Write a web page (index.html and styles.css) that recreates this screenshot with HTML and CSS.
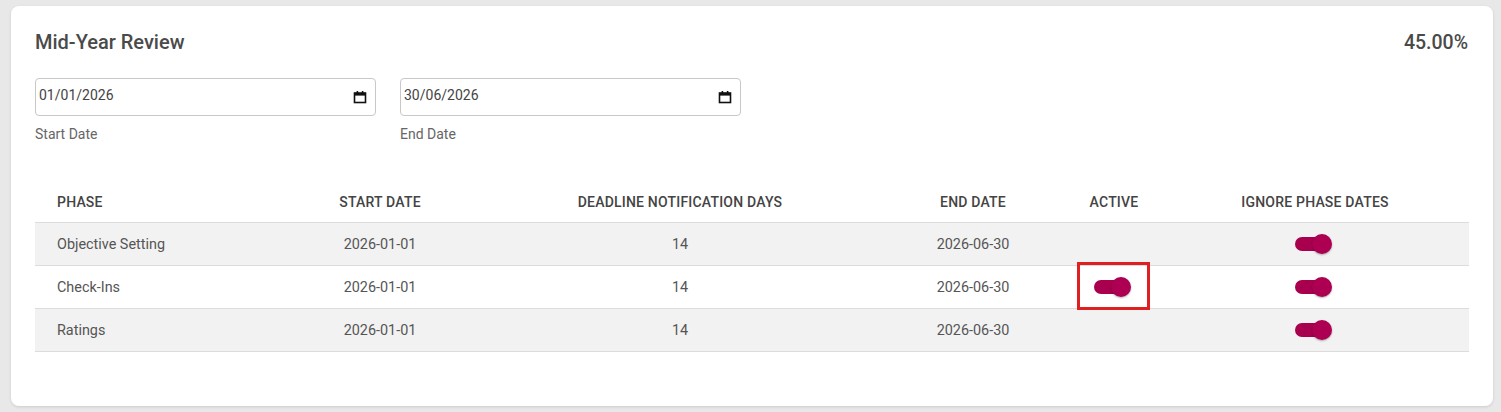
FILE: index.html
```html
<!DOCTYPE html>
<html lang="en">
<head>
  <meta charset="UTF-8">
  <meta name="viewport" content="width=device-width, initial-scale=1.0">
  <title>Mid-Year Review</title>
  <link rel="stylesheet" href="styles.css">
</head>
<body>
  <div class="card">
    <div class="card-head">
      <h2 class="title">Mid-Year Review</h2>
      <span class="score">45.00%</span>
    </div>

    <div class="dates">
      <div class="field">
        <div class="date-input">
          <span>01/01/2026</span>
          <svg class="cal" width="14" height="14" viewBox="0 0 14 14">
            <rect x="1.5" y="3" width="11" height="9.5" fill="none" stroke="#111" stroke-width="1.6"/>
            <rect x="1.5" y="3" width="11" height="2.6" fill="#111"/>
            <rect x="3.6" y="1" width="1.6" height="2.5" fill="#111"/>
            <rect x="8.8" y="1" width="1.6" height="2.5" fill="#111"/>
          </svg>
        </div>
        <label class="field-label">Start Date</label>
      </div>
      <div class="field">
        <div class="date-input">
          <span>30/06/2026</span>
          <svg class="cal" width="14" height="14" viewBox="0 0 14 14">
            <rect x="1.5" y="3" width="11" height="9.5" fill="none" stroke="#111" stroke-width="1.6"/>
            <rect x="1.5" y="3" width="11" height="2.6" fill="#111"/>
            <rect x="3.6" y="1" width="1.6" height="2.5" fill="#111"/>
            <rect x="8.8" y="1" width="1.6" height="2.5" fill="#111"/>
          </svg>
        </div>
        <label class="field-label">End Date</label>
      </div>
    </div>

    <table class="phases">
      <thead>
        <tr>
          <th class="c-phase">Phase</th>
          <th class="c-start">Start Date</th>
          <th class="c-days">Deadline Notification Days</th>
          <th class="c-end">End Date</th>
          <th class="c-active">Active</th>
          <th class="c-ignore">Ignore Phase Dates</th>
        </tr>
      </thead>
      <tbody>
        <tr>
          <td class="c-phase">Objective Setting</td>
          <td>2026-01-01</td>
          <td>14</td>
          <td>2026-06-30</td>
          <td></td>
          <td><span class="switch"><span class="knob"></span></span></td>
        </tr>
        <tr>
          <td class="c-phase">Check-Ins</td>
          <td>2026-01-01</td>
          <td>14</td>
          <td>2026-06-30</td>
          <td class="marked"><span class="switch"><span class="knob"></span></span><span class="mark"></span></td>
          <td><span class="switch"><span class="knob"></span></span></td>
        </tr>
        <tr>
          <td class="c-phase">Ratings</td>
          <td>2026-01-01</td>
          <td>14</td>
          <td>2026-06-30</td>
          <td></td>
          <td><span class="switch"><span class="knob"></span></span></td>
        </tr>
      </tbody>
    </table>
  </div>
</body>
</html>
```

FILE: styles.css
```css
body {
  margin: 0;
  padding: 6px 8px 6px 11px;
  background-color: #e8e8e8;
  font-family: 'Roboto', 'Liberation Sans', sans-serif;
  color: #555;
}

.card {
  height: 400px;
  box-sizing: border-box;
  background-color: #fff;
  border-radius: 8px;
  box-shadow: 0 1px 3px rgba(0, 0, 0, 0.12);
  padding: 24px 24px 0 24px;
}

.card-head {
  display: flex;
  justify-content: space-between;
  align-items: center;
  height: 24px;
}

.title {
  margin: 0;
  font-size: 20px;
  font-weight: 500;
  color: #4a4a4a;
}

.score {
  font-size: 19.5px;
  font-weight: 500;
  color: #4a4a4a;
  margin-right: 1px;
}

.dates {
  display: flex;
  gap: 24px;
  margin-top: 24px;
}

.field {
  display: flex;
  flex-direction: column;
  width: 341px;
}

.date-input {
  height: 38px;
  box-sizing: border-box;
  border: 1px solid #c8c8c8;
  border-radius: 4px;
  display: flex;
  align-items: center;
  justify-content: space-between;
  padding: 0 8px 0 3px;
  font-size: 14px;
  color: #444;
}

.date-input span {
  margin-top: -5px;
}

.cal {
  margin-top: -1px;
}

.field-label {
  margin-top: 10px;
  font-size: 14px;
  line-height: 16px;
  color: #666;
}

.phases {
  width: 100%;
  margin-top: 39px;
  border-collapse: collapse;
  table-layout: fixed;
}

.phases th {
  height: 41px;
  font-size: 14px;
  font-weight: 500;
  letter-spacing: 0.2px;
  color: #444;
  text-transform: uppercase;
  text-align: center;
  border-bottom: 1px solid #dcdcdc;
  padding: 0;
}

.phases td {
  height: 42px;
  font-size: 14.4px;
  color: #555;
  text-align: center;
  border-bottom: 1px solid #dcdcdc;
  padding: 0;
}

.phases tbody tr:nth-child(odd) {
  background-color: #f2f2f2;
}

.phases .c-phase {
  text-align: left;
  padding-left: 22px;
  width: 222px;
}

.c-start { width: 202px; }
.c-days { width: 398px; }
.c-end { width: 188px; }
.c-active { width: 94px; }
.c-ignore { width: 308px; }

.switch {
  display: inline-block;
  position: relative;
  width: 34px;
  height: 14px;
  border-radius: 7px;
  background-color: #a8004f;
  vertical-align: middle;
  margin-right: 6px;
  margin-top: -2px;
}

.knob {
  position: absolute;
  right: -3px;
  top: -3px;
  width: 20px;
  height: 20px;
  border-radius: 50%;
  background-color: #ad0052;
  box-shadow: 0 1px 2px rgba(0, 0, 0, 0.3);
}

.marked {
  position: relative;
}

.mark {
  position: absolute;
  left: 10px;
  top: -4px;
  width: 73px;
  height: 48px;
  box-sizing: border-box;
  border: 3px solid #e02020;
}
```
